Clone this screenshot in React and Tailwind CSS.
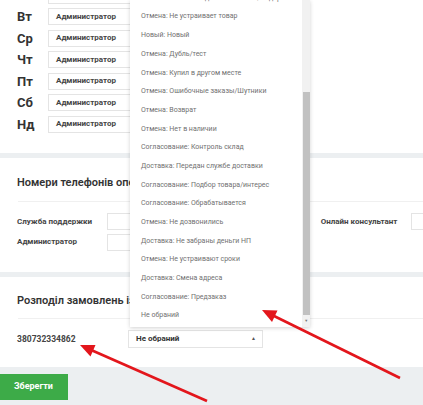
import React from "react";

const days = ["Пн", "Вт", "Ср", "Чт", "Пт", "Сб", "Нд"];
const items = [
  "Согласование: Ожидание поставки/Подарочный",
  "Отмена: Не устраивает товар",
  "Новый: Новый",
  "Отмена: Дубль/тест",
  "Отмена: Купил в другом месте",
  "Отмена: Ошибочные заказы/Шутники",
  "Отмена: Возврат",
  "Отмена: Нет в наличии",
  "Согласование: Контроль склад",
  "Доставка: Передан службе доставки",
  "Согласование: Подбор товара/интерес",
  "Согласование: Обрабатывается",
  "Отмена: Не дозвонились",
  "Доставка: Не забраны деньги НП",
  "Отмена: Не устраивают сроки",
  "Доставка: Смена адреса",
  "Согласование: Предзаказ",
  "Не обраний",
];

export default function App() {
  return (
    <div
      className="relative w-[423px] h-[405px] overflow-hidden bg-[#eceff1] text-[#333]"
      style={{ fontFamily: "Roboto, 'Liberation Sans', sans-serif" }}
    >
      <div className="flex flex-col">
        {/* Card 1 */}
        <div className="h-[153px] bg-white pl-[17px] overflow-hidden">
          <div className="-mt-[13.5px] flex flex-col gap-[4.5px]">
            {days.map((d) => (
              <div key={d} className="flex items-center h-[17px]">
                <div className="w-[31px] shrink-0 text-[13px] font-bold leading-none text-[#333]">{d}</div>
                <div className="h-[17px] w-[130px] shrink-0 border border-[#e4e4e4] pl-[7px] flex items-center text-[8px] font-bold text-[#444]">
                  Администратор
                </div>
              </div>
            ))}
          </div>
        </div>

        {/* Card 2 */}
        <div className="mt-[5px] h-[114px] bg-white pt-[18px] overflow-hidden">
          <div className="ml-[17px] w-[113px] overflow-hidden h-[14px] leading-[14px] text-[11px] font-semibold text-[#333] whitespace-nowrap">
            Номери телефонів операторів
          </div>
          <div className="mt-[11px] ml-[18px] border-t border-[#f0f0f0]" />
          <div className="mt-[11px] pl-[17px] flex flex-col gap-[3.7px]">
            <div className="flex items-center h-[17px]">
              <div className="w-[90px] shrink-0 whitespace-nowrap text-[8px] font-bold text-[#444]">Служба поддержки</div>
              <div className="w-[150px] shrink-0 h-[17px] border border-[#e4e4e4]" />
              <div className="ml-[63.7px] w-[90px] shrink-0 text-[8px] font-bold text-[#444] whitespace-nowrap">Онлайн консультант</div>
              <div className="w-[100px] shrink-0 h-[17px] border border-[#e4e4e4]" />
            </div>
            <div className="flex items-center h-[17px]">
              <div className="w-[90px] shrink-0 whitespace-nowrap text-[8px] font-bold text-[#444]">Администратор</div>
              <div className="w-[150px] shrink-0 h-[17px] border border-[#e4e4e4]" />
            </div>
          </div>
        </div>

        {/* Card 3 */}
        <div className="mt-[5px] h-[90px] bg-white pt-[17px]">
          <div className="ml-[17px] w-[113px] overflow-hidden h-[14px] leading-[14px] text-[11px] font-semibold text-[#333] whitespace-nowrap">
            Розподіл замовлень із статусами
          </div>
          <div className="mt-[10px] ml-[18px] border-t border-[#f0f0f0]" />
          <div className="mt-[11px] pl-[17px] flex items-center h-[18px]">
            <div className="w-[111px] shrink-0 text-[8.5px] font-bold text-[#444]">380732334862</div>
            <div className="w-[135px] shrink-0 h-[18px] border border-[#e4e4e4] pl-[7px] pr-[6px] flex items-center justify-between">
              <span className="text-[8px] font-bold text-[#333]">Не обраний</span>
              <span className="text-[5px] text-[#555]">▲</span>
            </div>
          </div>
        </div>

        <div className="mt-[7px] w-[68px] h-[26px] bg-[#3dab48] flex items-center pl-[14px] text-[9px] font-bold text-white">
          Зберегти
        </div>
      </div>

      {/* Dropdown */}
      <div className="absolute left-[130px] top-0 w-[180px] h-[327px] bg-white shadow-[0_1px_4px_rgba(0,0,0,0.18)] overflow-hidden flex">
        <div className="flex-1 -mt-[11.35px]">
          {items.map((t, i) => (
            <div key={i} className="h-[18.7px] flex items-center pl-[11px] text-[7px] text-[#707070] whitespace-nowrap">
              {t}
            </div>
          ))}
        </div>
        <div className="w-[8px] h-full bg-[#f1f1f1] flex flex-col">
          <div className="h-[92px]" />
          <div className="h-[223px] mx-[0.5px] bg-[#c1c1c1]" />
          <div className="flex-1 flex items-center justify-center text-[4px] text-[#777]">▼</div>
        </div>
      </div>

      {/* Red annotation arrows */}
      <svg className="absolute inset-0 pointer-events-none" width="423" height="405" viewBox="0 0 423 405">
        <line x1="400" y1="378" x2="272" y2="315" stroke="#e3161c" strokeWidth="2.6" />
        <polygon points="262,310 277.5,310.5 272,322" fill="#e3161c" />
        <line x1="207" y1="401" x2="90" y2="349.5" stroke="#e3161c" strokeWidth="2.6" />
        <polygon points="80,345 95.5,345 90.5,356.5" fill="#e3161c" />
      </svg>
    </div>
  );
}
